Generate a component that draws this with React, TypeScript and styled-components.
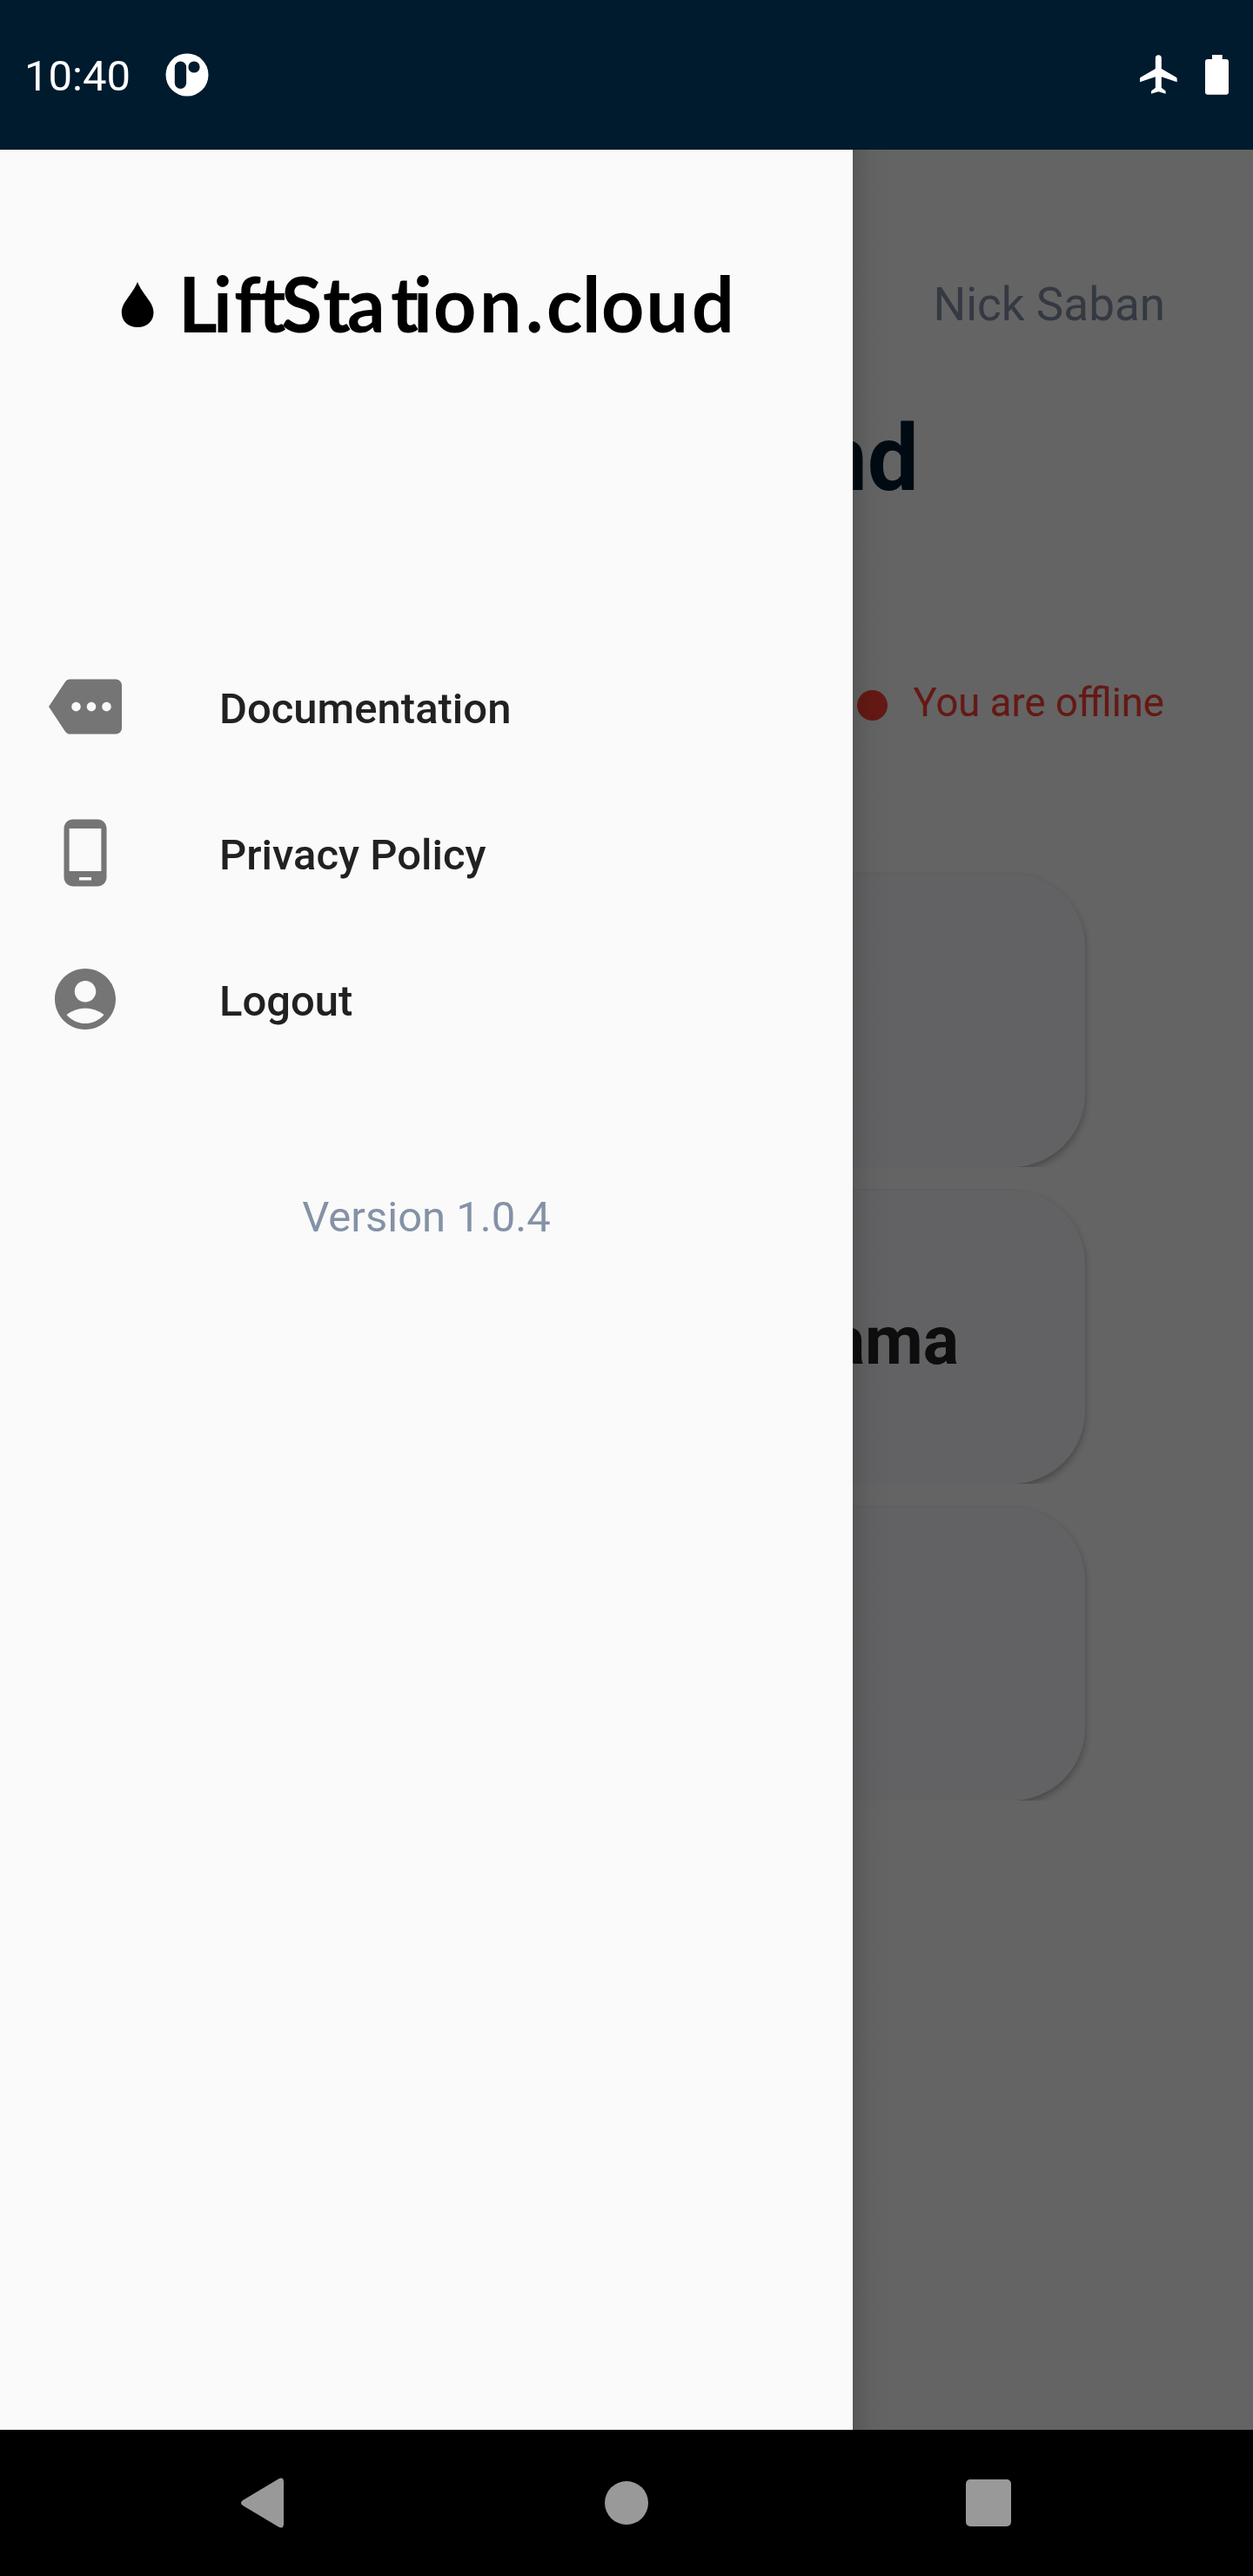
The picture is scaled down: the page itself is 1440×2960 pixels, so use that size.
import React from "react";
import styled, { createGlobalStyle } from "styled-components";
import { MdAccountCircle, MdMore, MdPhoneAndroid } from "react-icons/md";

const GlobalStyle = createGlobalStyle`
  * { box-sizing: border-box; }
  body { margin: 0; background: #000; font-family: Roboto, "Liberation Sans", sans-serif; }
`;

const Screen = styled.div`
  width: 1440px;
  height: 2960px;
  display: grid;
  grid-template-rows: 172px 2620px 168px;
  overflow: hidden;
`;

const StatusBar = styled.header`
  display: flex;
  align-items: center;
  justify-content: space-between;
  padding: 0 28px;
  background: #001b2e;
  color: #fff;
`;

const StatusGroup = styled.div<{ $gap: number }>`
  display: flex;
  align-items: center;
  gap: ${(p) => p.$gap}px;
`;

const Clock = styled.span`
  font-size: 49px;
  line-height: 58px;
  padding-top: 4px;
`;

const Main = styled.main`
  position: relative;
  overflow: hidden;
  background: #fafafa;
`;

const Home = styled.div`
  display: flex;
  flex-direction: column;
  align-items: center;
`;

const UserName = styled.div`
  align-self: flex-end;
  margin: 147px 101px 0 0;
  font-size: 53px;
  line-height: 62px;
  color: #828ea6;
`;

const Title = styled.h1`
  align-self: flex-end;
  margin: 87px 384px 0 0;
  font-size: 105px;
  font-weight: 700;
  line-height: 120px;
  color: #001b2e;
`;

const Connection = styled.div`
  align-self: flex-end;
  display: flex;
  align-items: center;
  gap: 30px;
  height: 54px;
  margin: 193px 102px 0 0;
  font-size: 45.5px;
  line-height: 54px;
  color: #fa4034;
`;

const Dot = styled.span`
  width: 35px;
  height: 35px;
  margin-top: 5px;
  border-radius: 50%;
  background: currentColor;
`;

const CardList = styled.div`
  display: flex;
  flex-direction: column;
  gap: 25px;
  margin-top: 167px;
`;

const CardSlot = styled.div`
  overflow: hidden;
  padding: 2px 21px 0;
`;

const Card = styled.section`
  display: flex;
  align-items: center;
  justify-content: flex-end;
  width: 1054px;
  height: 337px;
  padding: 8px 145px 0 0;
  border-radius: 84px;
  background: #f5f5f9;
  box-shadow: 0 4px 9px rgba(0, 0, 0, 0.3);
  font-size: 77px;
  font-weight: 700;
  color: #212121;
`;

const Scrim = styled.div`
  position: absolute;
  inset: 0;
  background: rgba(0, 0, 0, 0.6);
`;

const Drawer = styled.aside`
  position: absolute;
  inset: 0 auto 0 0;
  width: 980px;
  display: flex;
  flex-direction: column;
  background: #fafafa;

  &::after {
    content: "";
    position: absolute;
    top: 0;
    left: 100%;
    width: 44px;
    height: 100%;
    background: linear-gradient(90deg, rgba(0, 0, 0, 0.12), rgba(0, 0, 0, 0.035) 45%, transparent);
  }
`;

const Logo = styled.svg`
  display: block;
  width: 700px;
  height: 120px;
  margin: 118px 0 0 140px;
  overflow: visible;
`;

const Menu = styled.nav`
  display: flex;
  flex-direction: column;
  margin-top: 318px;
`;

const MenuItem = styled.a`
  display: flex;
  align-items: center;
  gap: 112px;
  height: 168px;
  padding-left: 56px;
  color: #212121;
  font-size: 49px;
  font-weight: 500;

  svg {
    width: 84px;
    height: 84px;
    color: #757575;
  }

  span {
    padding-top: 5px;
  }
`;

const Version = styled.div`
  margin-top: 138px;
  text-align: center;
  font-size: 49px;
  line-height: 58px;
  color: #8492a6;
`;

const NavBar = styled.footer`
  display: grid;
  grid-template-columns: 50px 50px 52px;
  column-gap: 367px;
  align-items: center;
  justify-content: start;
  padding-left: 276px;
  background: #000;
  color: #999;
`;

const logoX = [65, 105, 129, 156.5, 183, 231, 259, 309, 335, 358, 411, 464, 488, 529, 551, 602.5, 655];

const menu = [
  { label: "Documentation", Icon: MdMore },
  { label: "Privacy Policy", Icon: MdPhoneAndroid },
  { label: "Logout", Icon: MdAccountCircle },
];

export default function App() {
  return (
    <Screen>
      <GlobalStyle />
      <StatusBar>
        <StatusGroup $gap={40}>
          <Clock>10:40</Clock>
          <svg width="50" height="50" viewBox="0 0 50 50">
            <circle cx="25" cy="25" r="24.5" fill="#fff" />
            <rect x="10.8" y="9.5" width="13.3" height="31.4" rx="6.6" fill="#001b2e" />
            <circle cx="33" cy="16" r="6.6" fill="#001b2e" />
          </svg>
        </StatusGroup>
        <StatusGroup $gap={32}>
          <svg width="43" height="46" viewBox="210 189 129 138" fill="#fff">
            <path d="M263.500 200a10.500 10.500 0 0 1 21 0V237L335 266Q338 268 338 271V283L284.500 265V303L296 311Q299 313 299 316V323L274 316L249 323V316Q249 313 252 311L263.500 303V265L210 283V271Q210 268 213 266L263.500 237Z" />
          </svg>
          <svg width="27" height="46" viewBox="0 0 27 46" fill="#fff">
            <path d="M8 0H19.700V5H24a3 3 0 0 1 3 3V42.700a3 3 0 0 1-3 3H3a3 3 0 0 1-3-3V8a3 3 0 0 1 3-3H8Z" />
          </svg>
        </StatusGroup>
      </StatusBar>

      <Main>
        <Home>
          <UserName>Nick Saban</UserName>
          <Title>nd</Title>
          <Connection>
            <Dot />
            You are offline
          </Connection>
          <CardList>
            <CardSlot><Card /></CardSlot>
            <CardSlot><Card>ama</Card></CardSlot>
            <CardSlot><Card /></CardSlot>
          </CardList>
        </Home>
        <Scrim />
        <Drawer>
          <Logo viewBox="0 0 700 120">
            <path d="M18 34C24 49 36.500 57 36.500 69C36.500 79 29 86 18.300 86C7 86-.2 79-.2 69C-.2 57 12 49 18 34Z" />
            <text transform="translate(0 92.300) scale(1 1.030)" x={logoX.join(" ")} y="0" fontFamily="Lato, sans-serif" fontSize="86" fontWeight="700">
              LiftStation.cloud
            </text>
          </Logo>
          <Menu>
            {menu.map(({ label, Icon }) => (
              <MenuItem key={label}>
                <Icon />
                <span>{label}</span>
              </MenuItem>
            ))}
          </Menu>
          <Version>Version 1.0.4</Version>
        </Drawer>
      </Main>

      <NavBar>
        <svg width="50" height="58" viewBox="0 0 50 58" fill="currentColor">
          <path d="M44 1.500Q50-1.500 50 5V53Q50 59.500 44 56.500L3 32Q-1 29 3 26Z" />
        </svg>
        <svg width="54" height="50" viewBox="0 0 54 50" fill="currentColor">
          <circle cx="27" cy="25" r="25" />
        </svg>
        <svg width="52" height="54" viewBox="0 0 52 54" fill="currentColor">
          <rect width="52" height="54" rx="5" />
        </svg>
      </NavBar>
    </Screen>
  );
}
